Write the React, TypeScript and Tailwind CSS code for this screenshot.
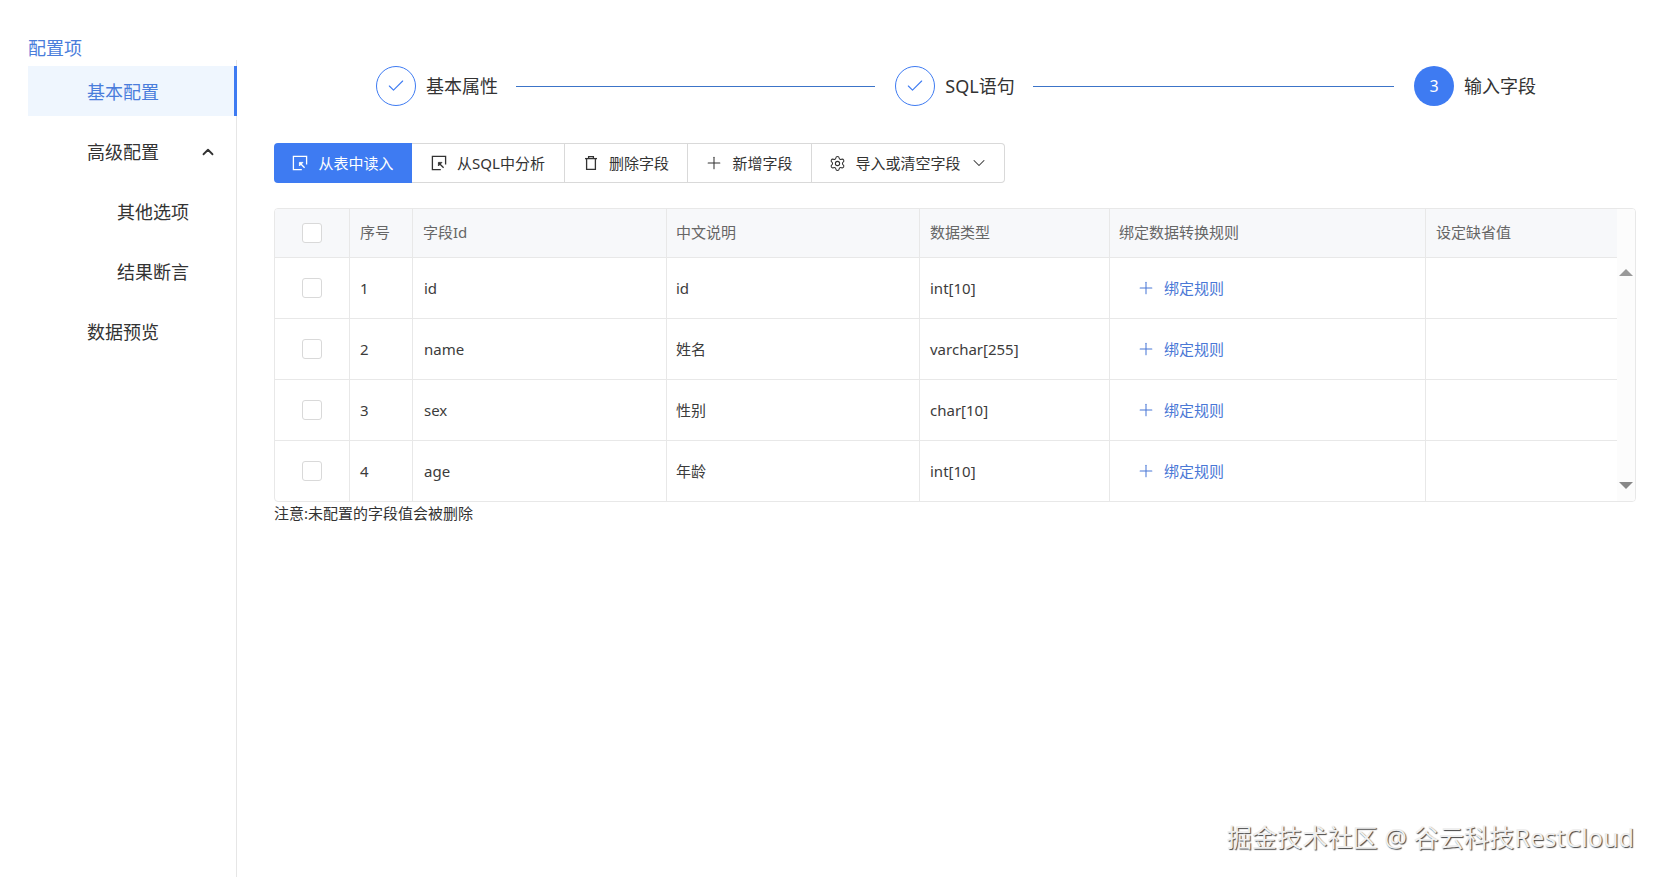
import { Check, ChevronDown, ChevronUp, Plus, Settings } from "lucide-react";

const FONT = "font-['Noto_Sans','Noto_Sans_CJK_SC',sans-serif]";

function ImportIcon() {
  return (
    <svg width="16" height="16" viewBox="0 0 16 16" fill="none" stroke="currentColor" strokeWidth="1.3" className="shrink-0">
      <path d="M9.8 14.6H1.4V1.4h13.2v8.2" />
      <path d="M7.6 7.8l5 5" />
      <path d="M7.4 7.4H11L7.4 11z" fill="currentColor" strokeWidth="0.8" />
    </svg>
  );
}

function TrashIcon() {
  return (
    <svg width="16" height="16" viewBox="0 0 16 16" fill="none" stroke="currentColor" strokeWidth="1.3" className="shrink-0">
      <path d="M2 3.6h12" />
      <path d="M5.6 3.4V1.6h4.8v1.8" />
      <path d="M3.6 3.6v10.8h8.8V3.6" />
    </svg>
  );
}

function Toolbar() {
  const cls = "h-full flex items-center justify-center gap-[10px] text-[15px] text-[#333]";
  return (
    <div className="flex h-10 items-stretch w-[731px]">
      <div className="w-[138px] rounded-l-[4px] bg-[#3e7bf2] text-white flex items-center justify-center gap-[10px] text-[15px]">
        <ImportIcon />
        <span>从表中读入</span>
      </div>
      <div className="flex flex-1 border border-l-0 border-[#d9d9d9] rounded-r-[4px]">
        <div className={`${cls} w-[153px] border-r border-[#d9d9d9]`}>
          <ImportIcon />
          <span>从SQL中分析</span>
        </div>
        <div className={`${cls} w-[123px] border-r border-[#d9d9d9]`}>
          <TrashIcon />
          <span>删除字段</span>
        </div>
        <div className={`${cls} w-[124px] border-r border-[#d9d9d9]`}>
          <Plus size={20} strokeWidth={1.25} className="-mx-[2px]" />
          <span>新增字段</span>
        </div>
        <div className={`${cls} flex-1`}>
          <Settings size={17} strokeWidth={1.5} className="-mr-px" />
          <span>导入或清空字段</span>
          <ChevronDown size={20} strokeWidth={1.25} className="-ml-[2px] -mr-[2px]" />
        </div>
      </div>
    </div>
  );
}

function StepCircle({ done, n }: { done?: boolean; n?: number }) {
  return done ? (
    <div className="w-10 h-10 rounded-full border border-[#3e7bf2] flex items-center justify-center text-[#3e7bf2] shrink-0">
      <Check size={20} strokeWidth={1.3} />
    </div>
  ) : (
    <div className="w-10 h-10 rounded-full bg-[#3e7bf2] text-white flex items-center justify-center text-[16px] shrink-0">{n}</div>
  );
}

function Steps() {
  const text = "text-[18px] text-[#333] whitespace-nowrap";
  return (
    <div className="flex items-center h-10 pl-[102px] pr-[123px]">
      <StepCircle done />
      <span className={`${text} ml-[10px] mr-[18px]`}>基本属性</span>
      <div className="h-px bg-[#3c74c8] basis-0 grow-[359]" />
      <div className="w-5" />
      <StepCircle done />
      <span className={`${text} ml-[10px] mr-[18px]`}>SQL语句</span>
      <div className="h-px bg-[#3c74c8] basis-0 grow-[361]" />
      <div className="w-5" />
      <StepCircle n={3} />
      <span className={`${text} ml-[10px]`}>输入字段</span>
    </div>
  );
}

const rows = [
  ["1", "id", "id", "int[10]"],
  ["2", "name", "姓名", "varchar[255]"],
  ["3", "sex", "性别", "char[10]"],
  ["4", "age", "年龄", "int[10]"],
];

const head = [
  { t: "序号", c: "pl-[10px]" },
  { t: "字段Id", c: "pl-[10px]" },
  { t: "中文说明", c: "pl-[9px]" },
  { t: "数据类型", c: "pl-[10px]" },
  { t: "绑定数据转换规则", c: "pl-[9px]" },
  { t: "设定缺省值", c: "pl-[10px]" },
];

function Box() {
  return <div className="w-5 h-5 mx-auto rounded-[3px] border border-[#d9d9d9] bg-white" />;
}

function Table() {
  const cellB = "border-r border-[#e8e8e8] px-[10px]";
  return (
    <div className="mt-[25px] flex w-[1362px] h-[294px] border border-[#e8e8e8] rounded-[4px] overflow-hidden">
      <table className="w-[1342px] table-fixed border-separate border-spacing-0 text-[15px]">
        <colgroup>
          <col className="w-[75px]" />
          <col className="w-[63px]" />
          <col className="w-[254px]" />
          <col className="w-[253px]" />
          <col className="w-[190px]" />
          <col className="w-[316px]" />
          <col className="w-[191px]" />
        </colgroup>
        <thead>
          <tr className="h-[49px] bg-[#f7f8fa] text-[#666]">
            <th className={`${cellB} border-b font-normal`}>
              <Box />
            </th>
            {head.map((h, i) => (
              <th
                key={h.t}
                className={`border-b border-[#e8e8e8] font-normal text-left pb-[2px] ${i < 5 ? "border-r" : ""} ${h.c}`}
              >
                {h.t}
              </th>
            ))}
          </tr>
        </thead>
        <tbody className="text-[#3c3c3c]">
          {rows.map((r, idx) => {
            const b = idx < 3 ? "border-b" : "";
            return (
              <tr key={r[0]} className={idx < 3 ? "h-[61px]" : "h-[60px]"}>
                <td className={`${cellB} ${b}`}>
                  <Box />
                </td>
                <td className={`${cellB} ${b}`}>{r[0]}</td>
                <td className={`${cellB} ${b} pl-[11px]`}>{r[1]}</td>
                <td className={`${cellB} ${b} pl-[9px]`}>{r[2]}</td>
                <td className={`${cellB} ${b}`}>{r[3]}</td>
                <td className={`${cellB} ${b} pl-[26px]`}>
                  <div className="flex items-center gap-[8px] text-[#4a78d6]">
                    <Plus size={20} strokeWidth={1.25} />
                    <span>绑定规则</span>
                  </div>
                </td>
                <td className={`border-[#e8e8e8] ${b}`} />
              </tr>
            );
          })}
        </tbody>
      </table>
      <div className="w-[18px] bg-[#fcfcfc] flex flex-col items-center justify-between pt-[60px] pb-[12px]">
        <div className="w-0 h-0 border-x-[7px] border-x-transparent border-b-[7px] border-b-[#999]" />
        <div className="w-0 h-0 border-x-[7px] border-x-transparent border-t-[7px] border-t-[#888]" />
      </div>
    </div>
  );
}

function Sidebar() {
  const item = "h-[50px] flex items-center pt-[2px] text-[18px] text-[#333] mb-[10px]";
  return (
    <aside className="w-[237px] shrink-0 pl-[28px] pt-[36px]">
      <div className="h-[24px] text-[18px] leading-[24px] text-[#4a7ddb]">配置项</div>
      <div className="border-r border-[#e6e6e6] min-h-[817px] ml-[-28px] pl-[28px] pt-[6px]">
        <div className="h-[50px] flex items-center pt-[2px] pl-[59px] bg-[#eff6fe] border-r-[3px] border-[#3e7bf2] mr-[-1px] text-[18px] text-[#4a7ddb] mb-[10px]">
          基本配置
        </div>
        <div className={`${item} pl-[59px] pr-[19px] justify-between`}>
          <span>高级配置</span>
          <ChevronUp size={18} strokeWidth={2.4} />
        </div>
        <div className={`${item} pl-[89px]`}>其他选项</div>
        <div className={`${item} pl-[89px]`}>结果断言</div>
        <div className={`${item} pl-[59px]`}>数据预览</div>
      </div>
    </aside>
  );
}

export default function App() {
  return (
    <div className={`relative flex h-[877px] w-[1659px] overflow-hidden bg-white ${FONT}`}>
      <Sidebar />
      <main className="flex-1 pl-[37px] pt-[66px]">
        <Steps />
        <div className="mt-[37px]">
          <Toolbar />
        </div>
        <Table />
        <div className="text-[15px] leading-[22px] text-[#333]">注意:未配置的字段值会被删除</div>
      </main>
      <div className="absolute right-[25px] top-[817px] text-[25.2px] leading-[40px] text-[#efefef] [text-shadow:1px_1px_1px_#444] whitespace-nowrap">
        掘金技术社区 @ 谷云科技RestCloud
      </div>
    </div>
  );
}
